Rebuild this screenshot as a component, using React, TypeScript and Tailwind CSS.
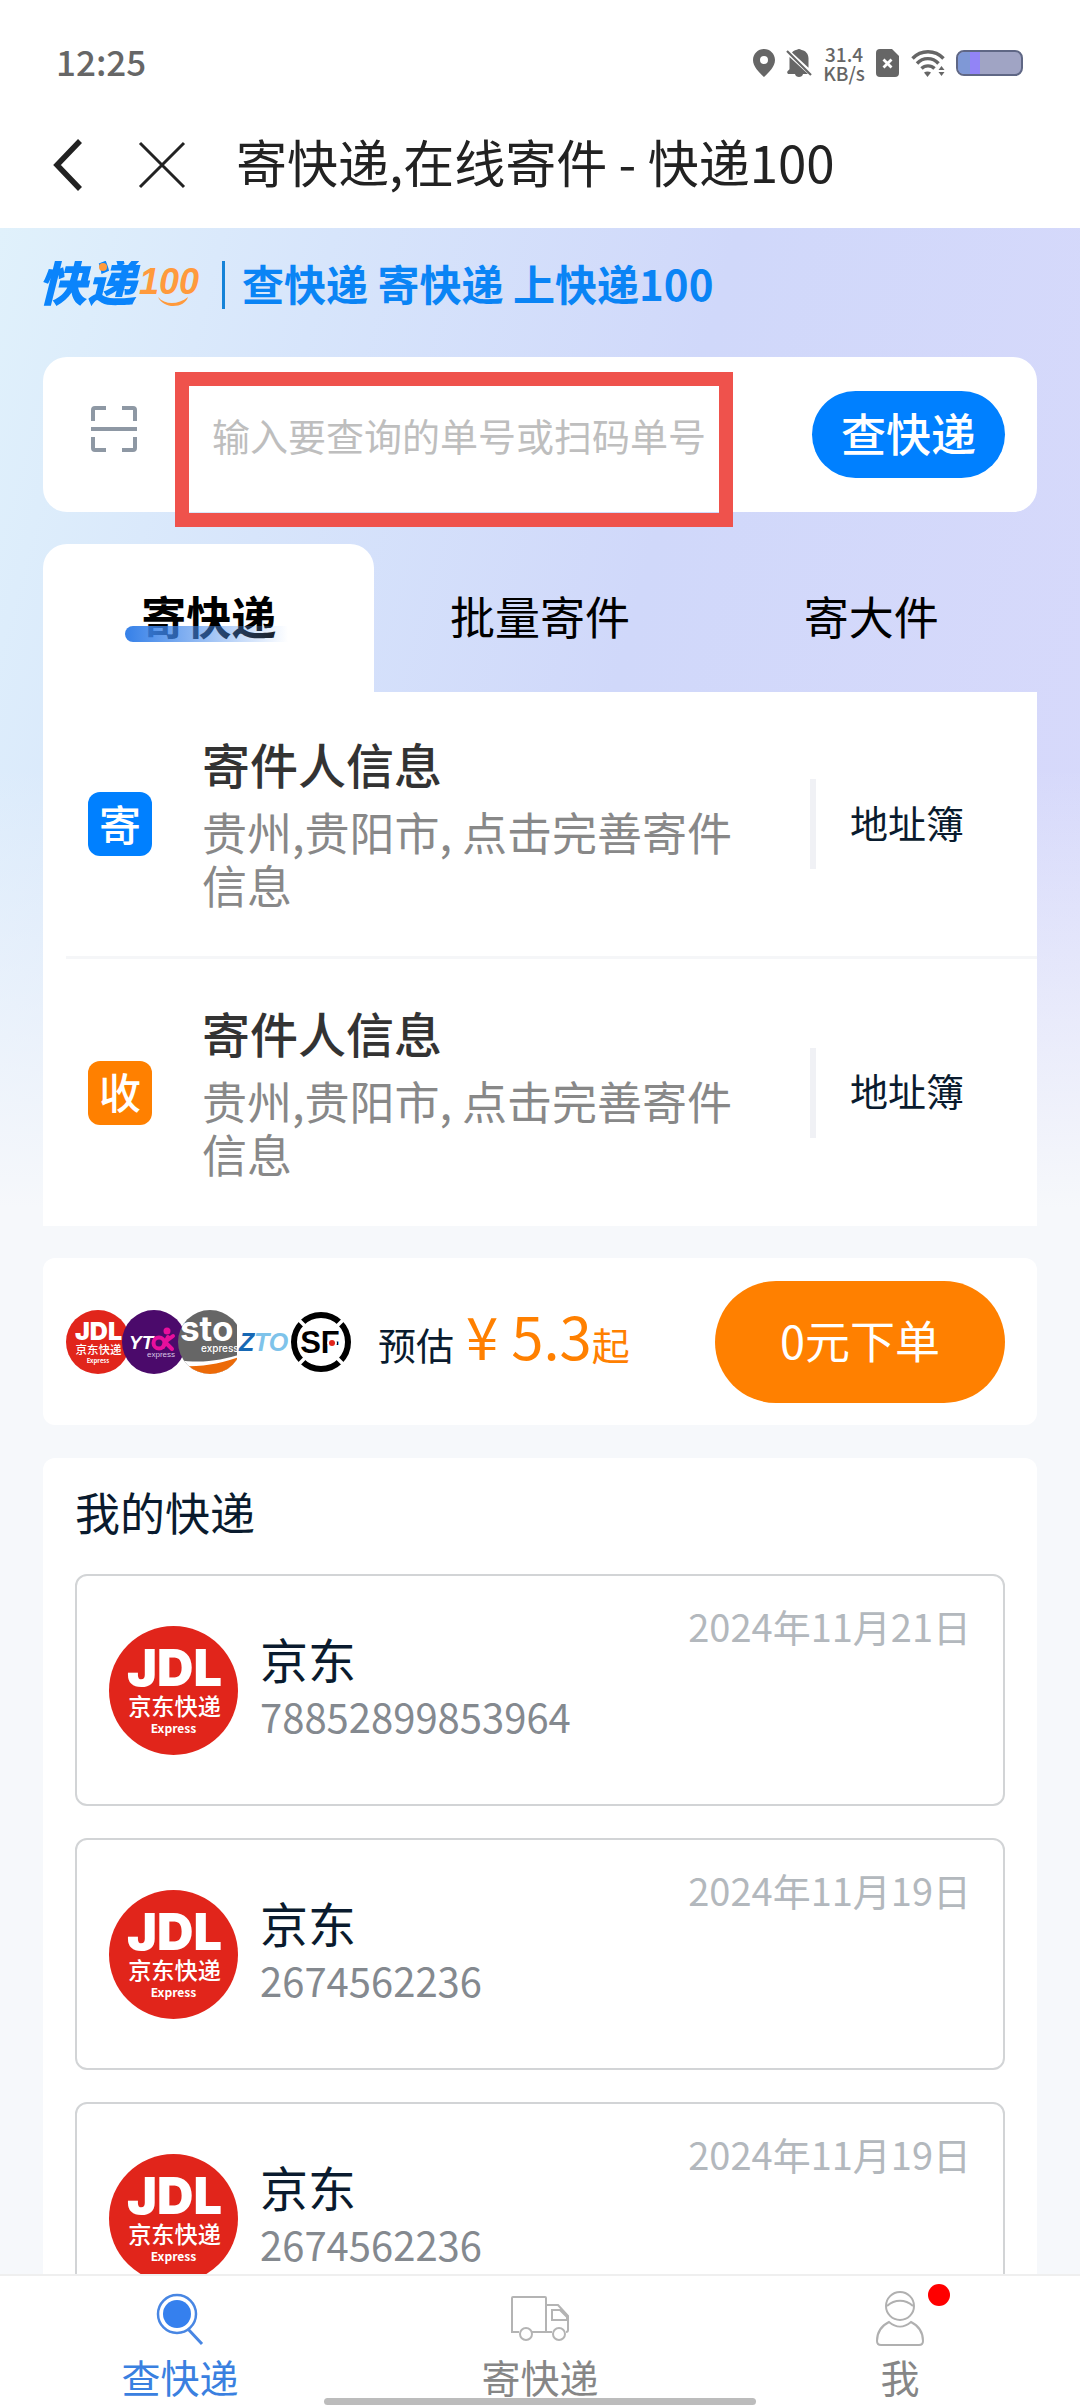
import { useState } from 'react'
import type { ReactNode } from 'react'

const tabs = ['寄快递', '批量寄件', '寄大件']

const contacts = [
  { id: 'sender', badge: '寄', color: 'bg-[#0080ff]' },
  { id: 'receiver', badge: '收', color: 'bg-[#ff8000]' },
]

const parcels = [
  { id: 1, company: '京东', number: '78852899853964', date: '2024年11月21日' },
  { id: 2, company: '京东', number: '2674562236', date: '2024年11月19日' },
  { id: 3, company: '京东', number: '2674562236', date: '2024年11月19日' },
]

function StatusBar() {
  return (
    <div className="flex h-[126px] items-center justify-between pr-[57px] pl-14 text-[#666]">
      <span className="pb-1 text-[35px] font-medium">12:25</span>
      <div className="flex items-center gap-[11px]">
        <svg className="h-7 w-[22px]" viewBox="0 0 22 28" fill="currentColor">
          <path
            fillRule="evenodd"
            d="M11 0C5 0 0 4.8 0 11c0 6.500 6 12.500 11 17 5-4.500 11-10.500 11-17C22 4.800 17 0 11 0zm0 7a4 4 0 110 8 4 4 0 010-8z"
          />
        </svg>
        <svg className="h-7 w-[26px]" viewBox="0 0 26 28" fill="currentColor">
          <path d="M6 3.500C7.500 1.500 9.500 1 11 .8c.8-1 3.200-1 4 0 4.500.8 7.500 4 7.500 8.700v9.300L6 3.500zM3.500 8L22 25H2c-1.200-1-1-2.500 0-3.300l1.500-1.500V8zM9 25h8c-.5 4-7.500 4-8 0z" />
          <path d="M1 2l24 24" stroke="currentColor" strokeWidth="2.200" />
        </svg>
        <span className="flex flex-col items-center text-[19px] leading-[19px] font-medium">
          <span>31.4</span>
          <span>KB/s</span>
        </span>
        <svg className="h-7 w-6" viewBox="0 0 24 28">
          <path fill="currentColor" d="M4 0h12l7 7v17a4 4 0 01-4 4H4a4 4 0 01-4-4V4a4 4 0 014-4z" />
          <path d="M7.500 10.500l8 8m0-8l-8 8" stroke="#fff" strokeWidth="2.800" />
        </svg>
        <svg className="h-7 w-[34px]" viewBox="0 0 34 28" fill="none" stroke="currentColor" strokeWidth="3.400">
          <path d="M1.500 9.500c8.500-9 22.500-9 31 0" />
          <path d="M6 14.500c6-6.500 15.500-6.500 21.500 0" />
          <path d="M10.500 19.500c3.500-3.500 9.500-3.500 13 0" />
          <path d="M13 23.500c2-1.500 5-1.500 7 0L16.500 28z" fill="currentColor" stroke="none" />
          <path d="M27.500 21l3-4 3 4zm0 2h6l-3 4z" fill="currentColor" stroke="none" />
        </svg>
        <span className="flex h-[26px] w-[67px] rounded-lg border-2 border-[#5f6785] bg-[#a0a4c4]">
          <span className="w-3 rounded-l-md bg-[#7f98d6]" />
          <span className="w-2.5 bg-[#9284f6]" />
        </span>
      </div>
    </div>
  )
}

function Header() {
  return (
    <header className="shrink-0 bg-white">
      <StatusBar />
      <div className="flex h-[102px] items-center pb-6 pl-[52px] text-[#222]">
        <button type="button" aria-label="返回">
          <svg className="h-[52px] w-8" viewBox="0 0 32 52" fill="none" stroke="currentColor" strokeWidth="5.500">
            <path d="M28 2L5 26l23 24" />
          </svg>
        </button>
        <button type="button" aria-label="关闭" className="ml-[54px]">
          <svg className="size-12" viewBox="0 0 48 48" fill="none" stroke="currentColor" strokeWidth="3">
            <path d="M2 2l44 44M46 2L2 46" />
          </svg>
        </button>
        <h1 className="ml-[50px] pb-2 text-[51px] leading-[64px]">寄快递,在线寄件 - 快递100</h1>
      </div>
    </header>
  )
}

function BrandLogo() {
  return (
    <svg className="h-12 w-[164px]" viewBox="0 0 164 48" fontStyle="italic">
      <text x="-5" y="40" fontSize="49" fontWeight="900" fill="#0a84fb">
        快递
      </text>
      <circle cx="60" cy="6" r="4" fill="#ff9a3c" />
      <text x="96" y="33" fontSize="36" fontWeight="700" fill="#ff9a3c" fontFamily="'Liberation Sans', sans-serif">
        100
      </text>
      <path d="M115 36c7 8 20 8 30 0-3 11-24 13-30 0z" fill="#ff9a3c" />
    </svg>
  )
}

function JdlLogo({ className }: { className: string }) {
  return (
    <svg className={className} viewBox="0 0 128 128" textAnchor="middle" fill="#fff">
      <circle cx="64" cy="64" r="64" fill="#e1251b" />
      <text x="65" y="60" fontSize="50" fontWeight="900" fontFamily="Inter, sans-serif">
        JDL
      </text>
      <text x="65" y="88" fontSize="23" fontWeight="500">
        京东快递
      </text>
      <text x="64" y="106" fontSize="12" fontWeight="700">
        Express
      </text>
    </svg>
  )
}

function CourierLogos() {
  return (
    <div className="flex items-center">
      <JdlLogo className="size-16" />
      <svg className="-ml-2 size-16" viewBox="0 0 64 64">
        <circle cx="32" cy="32" r="32" fill="#4b0a6b" />
        <text x="7" y="39" fontSize="19" fontWeight="800" fontStyle="italic" fill="#fff" fontFamily="'Liberation Sans', sans-serif">
          YT
        </text>
        <circle cx="37" cy="33" r="5.500" fill="none" stroke="#e80f9c" strokeWidth="4" />
        <circle cx="45" cy="21" r="3.500" fill="#e80f9c" />
        <path d="M41 37l5-10m-3 5l8-6m-7 7l6 6" stroke="#e80f9c" strokeWidth="4" fill="none" strokeLinecap="round" />
        <text x="25" y="47" fontSize="8" fill="#d9c5e4" fontFamily="'Liberation Sans', sans-serif">
          express
        </text>
      </svg>
      <svg className="-ml-2 size-16" viewBox="0 0 64 64">
        <clipPath id="sto">
          <circle cx="32" cy="32" r="32" />
        </clipPath>
        <g clipPath="url(#sto)">
          <path d="M0 0h64v64H0z" fill="#666" />
          <path d="M0 50c24 4 44 0 64-6v20H0z" fill="#fff" />
          <path d="M4 56c24 1 40-3 60-10v20H4z" fill="#ec6a08" />
          <text x="2" y="31" fontSize="35" fontWeight="700" fill="#fff" fontFamily="Inter, sans-serif">
            sto
          </text>
          <text x="23" y="42" fontSize="10" fontWeight="500" fill="#fff" fontFamily="Inter, sans-serif">
            express
          </text>
        </g>
      </svg>
      <svg className="-ml-2 size-16" viewBox="0 0 64 64">
        <path d="M3 0h61v64H3z" fill="#fff" />
        <g fontSize="25" fontWeight="800" fontStyle="italic" fontFamily="'Liberation Sans', sans-serif">
          <text x="5" y="41" fill="#1768b4">
            Z
          </text>
          <text x="20" y="41" fill="#7ec3ea">
            TO
          </text>
        </g>
      </svg>
      <svg className="-ml-2 size-16" viewBox="0 0 64 64">
        <circle cx="31" cy="32" r="32" fill="#fff" />
        <circle cx="31" cy="32" r="27" fill="none" stroke="#000" strokeWidth="6" />
        <path d="M8 9l8 8M54 9l-8 8M8 55l8-8M54 55l-8-8" stroke="#fff" strokeWidth="3.500" />
        <text x="30" y="43" fontSize="31" fontWeight="700" textAnchor="middle" fontFamily="'Liberation Sans', sans-serif">
          SF
        </text>
        <circle cx="42" cy="33" r="5" fill="#fff" />
        <circle cx="42" cy="33" r="3" fill="#e1251b" />
      </svg>
    </div>
  )
}

function SearchCard() {
  return (
    <form className="flex h-[155px] items-center rounded-3xl bg-white pr-8" onSubmit={(e) => e.preventDefault()}>
      <button type="button" aria-label="扫码" className="ml-12 pb-3 text-[#8e98a4]">
        <svg className="size-[46px]" viewBox="0 0 46 46" fill="none" stroke="currentColor" strokeWidth="4">
          <path d="M2 15V4q0-2 2-2h11M31 2h11q2 0 2 2v11M44 31v11q0 2-2 2H31M15 44H4q-2 0-2-2V31M0 23h46" />
        </svg>
      </button>
      <div className="relative ml-[38px] flex h-full w-[558px] items-center pl-[37px]">
        <input
          type="text"
          aria-label="快递单号"
          placeholder="输入要查询的单号或扫码单号"
          className="h-16 w-full text-[38px] outline-none placeholder:text-[#bebebe]"
        />
        <div className="pointer-events-none absolute inset-x-0 top-[15px] -bottom-[15px] border-[14px] border-[#ef524c]" />
      </div>
      <button type="submit" className="ml-auto h-[87px] w-[193px] rounded-full bg-[#0080ff] pb-1 text-[45px] font-medium text-white">
        查快递
      </button>
    </form>
  )
}

function SendPanel() {
  const [active, setActive] = useState(tabs[0])

  return (
    <section className="mt-8">
      <div className="grid h-[148px] grid-cols-3">
        {tabs.map((tab) => (
          <button
            key={tab}
            type="button"
            onClick={() => setActive(tab)}
            className={
              tab === active
                ? 'rounded-t-3xl bg-white pb-1 text-[45px] font-bold text-black'
                : 'pb-1 text-[45px] text-black'
            }
          >
            <span className="relative">
              {tab}
              {tab === active && (
                <span className="absolute -right-3 bottom-1.5 -left-4 h-4 rounded-l-full bg-linear-to-r from-[#3580e8] to-white/10" />
              )}
            </span>
          </button>
        ))}
      </div>
      <div className="bg-white">
        {contacts.map((contact, i) => (
          <div key={contact.id} className="pl-[23px]">
            <div
              className={
                i === 0
                  ? 'flex h-[267px] items-center border-b-3 border-[#f5f6f8] pl-[22px]'
                  : 'flex h-[267px] items-center pl-[22px]'
              }
            >
              <span
                className={`flex size-16 shrink-0 items-center justify-center rounded-xl pb-1 text-[42px] font-medium text-white ${contact.color}`}
              >
                {contact.badge}
              </span>
              <div className="ml-[50px] w-[550px]">
                <h2 className="mb-4 text-5xl leading-[52px] font-medium text-[#333]">寄件人信息</h2>
                <p className="text-[45px] leading-[53px] text-[#888]">贵州,贵阳市, 点击完善寄件信息</p>
              </div>
              <div className="ml-auto flex h-[90px] items-center border-l-6 border-[#f0f1f5] pr-[73px] pl-[34px]">
                <button type="button" className="pb-1.5 text-[38px] text-[#0a1b2e]">
                  地址簿
                </button>
              </div>
            </div>
          </div>
        ))}
      </div>
    </section>
  )
}

function PriceCard() {
  return (
    <section className="mt-8 flex h-[167px] items-center rounded-xl bg-white pr-8 pl-[23px]">
      <CourierLogos />
      <p className="ml-6 flex items-baseline pb-3 text-[38px] text-[#0a1b2e]">
        预估
        <span className="ml-3 text-[#ff8000]">
          <span className="text-[58px]">¥ 5.3</span>起
        </span>
      </p>
      <button type="button" className="ml-auto h-[122px] w-[290px] rounded-full bg-[#ff8000] pb-1 text-[45px] text-white">
        0元下单
      </button>
    </section>
  )
}

function ParcelList() {
  return (
    <section className="mt-[33px] rounded-t-xl bg-white px-8 pt-6">
      <h2 className="text-[45px] leading-[60px] text-[#0a1b2e]">我的快递</h2>
      <ul className="mt-8 space-y-8">
        {parcels.map((parcel) => (
          <li key={parcel.id}>
            <a href="#" className="flex h-[232px] rounded-xl border-2 border-[#d2d4d6] px-8">
              <JdlLogo className="size-[129px] self-center" />
              <div className="ml-[22px] pt-13">
                <p className="text-5xl leading-[60px] text-[#0a1b2e]">{parcel.company}</p>
                <p className="text-[40px] leading-[56px] text-[#84898f]">{parcel.number}</p>
              </div>
              <time className="ml-auto pt-6 text-[38px] leading-[52px] text-[#b3b8bd]">{parcel.date}</time>
            </a>
          </li>
        ))}
      </ul>
    </section>
  )
}

function NavItem({ label, active, dot, children }: { label: string; active?: boolean; dot?: boolean; children: ReactNode }) {
  return (
    <a
      href="#"
      className={active ? 'flex flex-col items-center text-[#3a80e0]' : 'flex flex-col items-center text-[#868686]'}
    >
      <span className="relative mt-3">
        {children}
        {dot && <span className="absolute -top-1 -right-5 size-[22px] rounded-full bg-[#f00]" />}
      </span>
      <span className="text-[39px] leading-[52px]">{label}</span>
    </a>
  )
}

function TabBar() {
  return (
    <nav className="relative grid h-[134px] shrink-0 grid-cols-3 border-t-2 border-[#efefef] bg-white">
      <NavItem label="查快递" active>
        <svg className="h-[62px] w-[60px]" viewBox="0 0 60 62" fill="none" stroke="#4886e3">
          <circle cx="27" cy="26" r="19" strokeWidth="2.500" />
          <circle cx="27" cy="26" r="14" fill="#3580ee" stroke="none" />
          <path d="M38 41l14 15" strokeWidth="3" />
        </svg>
      </NavItem>
      <NavItem label="寄快递">
        <svg className="h-[62px] w-[60px]" viewBox="0 0 60 62" fill="none" stroke="#b4b4b4" strokeWidth="2">
          <path d="M9 44H2V10q0-1 1-1h32q1 0 1 1v34H22M36 17h12l10 11v14q0 2-2 2M42 44h-6M42 22h8l7 7v3H42z" />
          <circle cx="16" cy="46" r="6" />
          <circle cx="49" cy="46" r="6" />
        </svg>
      </NavItem>
      <NavItem label="我" dot>
        <svg className="h-[62px] w-[60px]" viewBox="0 0 60 62" fill="none" stroke="#b0b0b0" strokeWidth="2">
          <circle cx="30" cy="18" r="14" />
          <path d="M17 18c8-7 18-7 26 0M19 34c7 6 15 6 22 0 8 4 12 11 12 19 0 3-1 4-4 4H11c-3 0-4-1-4-4 0-8 4-15 12-19z" />
        </svg>
      </NavItem>
      <div className="absolute bottom-[3px] left-1/2 h-[7px] w-2/5 -translate-x-1/2 rounded-full bg-[#bcbcbc]" />
    </nav>
  )
}

export default function App() {
  return (
    <div className="flex h-screen flex-col bg-[#f6f8fb] font-['Noto_Sans_CJK_SC',sans-serif]">
      <Header />
      <main className="min-h-0 flex-1 overflow-y-auto [scrollbar-width:none]">
        <div className="bg-[linear-gradient(to_bottom,transparent_55%,#f6f8fb_100%),linear-gradient(105deg,#e0f1fb_0%,#d7e5fb_25%,#d0d8fa_55%,#d8d9fb_100%)] bg-[length:100%_980px] bg-no-repeat px-[43px]">
          <div className="flex items-center pt-[33px] pb-12">
            <BrandLogo />
            <p className="ml-[15px] border-l-3 border-[#1583d8] pb-1 pl-[17px] text-[42px] leading-[44px] font-bold text-[#0a84f5]">
              查快递 寄快递 上快递100
            </p>
          </div>
          <SearchCard />
          <SendPanel />
          <PriceCard />
          <ParcelList />
        </div>
      </main>
      <TabBar />
    </div>
  )
}
